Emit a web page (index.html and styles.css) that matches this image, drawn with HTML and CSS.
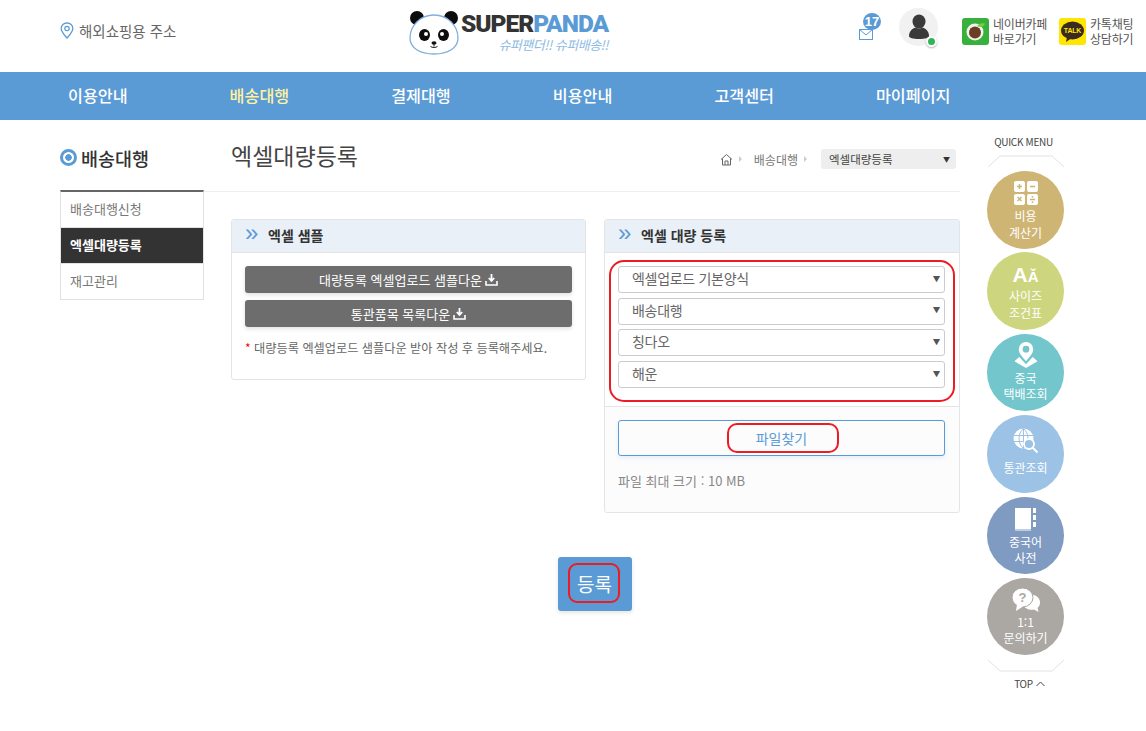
FILE: index.html
```html
<!DOCTYPE html>
<html lang="ko">
<head>
<meta charset="utf-8">
<title>엑셀대량등록</title>
<link rel="stylesheet" href="styles.css">
</head>
<body>
<header class="top">
  <a class="addr">
    <svg class="addr-ico" width="14" height="17" viewBox="0 0 14 17"><path d="M7 1C3.7 1 1.2 3.4 1.2 6.5 1.2 10 5 13.6 7 16c2-2.4 5.8-6 5.8-9.5C12.800 3.400 10.300 1 7 1z" fill="none" stroke="#5b9bd5" stroke-width="1.300"/><circle cx="7" cy="6.500" r="2.200" fill="none" stroke="#5b9bd5" stroke-width="1.200"/></svg>
    <span>해외쇼핑용 주소</span>
  </a>
  <div class="logo">
    <svg class="panda" width="52" height="46" viewBox="0 0 52 46">
      <circle cx="9" cy="8" r="7" fill="#0c0c0c"/>
      <circle cx="43" cy="8" r="7" fill="#0c0c0c"/>
      <path d="M26 5C12 5 2 16 2 28c0 10 10 16 24 16s24-6 24-16C50 16 40 5 26 5z" fill="#fff" stroke="#7fb0de" stroke-width="1.300"/>
      <ellipse cx="16.500" cy="25" rx="5.500" ry="6" fill="#0c0c0c"/>
      <ellipse cx="35.500" cy="25" rx="5.500" ry="6" fill="#0c0c0c"/>
      <circle cx="18" cy="24" r="2" fill="#fff"/>
      <circle cx="34" cy="24" r="2" fill="#fff"/>
      <ellipse cx="26" cy="33" rx="2.500" ry="1.800" fill="#111"/>
      <path d="M26 34v2.500M22.500 36.500c1.500 1.300 5.500 1.300 7 0" fill="none" stroke="#222" stroke-width="1"/>
    </svg>
    <div class="logo-text">
      <div class="logo-name"><span class="logo-dark">SUPER</span><span class="logo-blue">PANDA</span></div>
      <div class="logo-slogan">슈퍼팬더!! 슈퍼배송!!</div>
    </div>
  </div>
  <div class="util">
    <div class="mail">
      <span class="mail-count">17</span>
      <svg class="mail-ico" width="14" height="11" viewBox="0 0 14 11"><rect x=".5" y=".5" width="13" height="10" fill="#fff" stroke="#5b9bd5"/><path d="M.8.800 7 6l6.200-5.200" fill="none" stroke="#5b9bd5"/></svg>
    </div>
    <div class="avatar">
      <svg width="22" height="26" viewBox="0 0 22 26"><ellipse cx="11" cy="7.500" rx="6.500" ry="7" fill="#3a3a3a"/><path d="M1 22c0-5 3.500-7.500 6.500-8.500 2 1.300 5 1.300 7 0 3 1 6.500 3.500 6.500 8.500 0 2-4 3-10 3S1 24 1 22z" fill="#3a3a3a"/></svg>
      <span class="online"></span>
    </div>
    <a class="ext ext-cafe">
      <svg width="27" height="27" viewBox="0 0 27 27"><rect width="27" height="27" rx="3" fill="#37b03c"/><circle cx="13" cy="14" r="8.500" fill="#f3f3ee"/><circle cx="13" cy="14.500" r="6" fill="#6b3d22"/><path d="M15 8c2-2.500 5-3 8-2.500-1 3-4 4.500-8 2.500z" fill="#7ecb3d"/></svg>
      <span>네이버카페<br>바로가기</span>
    </a>
    <a class="ext ext-talk">
      <svg width="27" height="27" viewBox="0 0 27 27"><rect width="27" height="27" rx="3" fill="#ffe600"/><ellipse cx="13.500" cy="12.500" rx="11.500" ry="9" fill="#3a2a20"/><path d="M8 19l-1 5 5-3.500z" fill="#3a2a20"/><text class="talk-text" x="13.500" y="15" text-anchor="middle">TALK</text></svg>
      <span>카톡채팅<br>상담하기</span>
    </a>
  </div>
</header>

<nav class="gnb">
  <a>이용안내</a>
  <a class="on">배송대행</a>
  <a>결제대행</a>
  <a>비용안내</a>
  <a>고객센터</a>
  <a>마이페이지</a>
</nav>

<div class="page">
  <aside class="side">
    <h2 class="side-title"><span class="side-dot"></span>배송대행</h2>
    <ul class="side-menu">
      <li>배송대행신청</li>
      <li class="on">엑셀대량등록</li>
      <li>재고관리</li>
    </ul>
  </aside>

  <main class="main">
    <div class="title-row">
      <h1>엑셀대량등록</h1>
      <div class="crumbs">
        <svg width="13" height="13" viewBox="0 0 13 13"><path d="M1 6.500 6.500 1.500l5.500 5M2.500 5.500V12h8V5.500M5 12V8h3v4" fill="none" stroke="#666" stroke-width="1"/></svg>
        <i class="crumb-arrow"></i>
        <span>배송대행</span>
        <i class="crumb-arrow crumb-arrow-last"></i>
        <div class="crumb-select"><span>엑셀대량등록</span><b>▼</b></div>
      </div>
    </div>

    <div class="panels">
      <section class="panel panel-left">
        <h3 class="panel-head"><span class="chev">»</span><span>엑셀 샘플</span></h3>
        <div class="panel-body">
          <a class="dl-btn">대량등록 엑셀업로드 샘플다운
            <svg width="13" height="13" viewBox="0 0 13 13"><path d="M6.500 1v6.500M3.800 5l2.700 3 2.700-3" fill="none" stroke="#fff" stroke-width="1.800"/><path d="M1 8v4h11V8" fill="none" stroke="#fff" stroke-width="1.600"/></svg></a>
          <a class="dl-btn">통관품목 목록다운
            <svg width="13" height="13" viewBox="0 0 13 13"><path d="M6.500 1v6.500M3.800 5l2.700 3 2.700-3" fill="none" stroke="#fff" stroke-width="1.800"/><path d="M1 8v4h11V8" fill="none" stroke="#fff" stroke-width="1.600"/></svg></a>
          <p class="note"><em>*</em> 대량등록 엑셀업로드 샘플다운 받아 작성 후 등록해주세요.</p>
        </div>
      </section>

      <section class="panel panel-right">
        <h3 class="panel-head"><span class="chev">»</span><span>엑셀 대량 등록</span></h3>
        <div class="select-group">
          <div class="sel"><span>엑셀업로드 기본양식</span><b>▼</b></div>
          <div class="sel"><span>배송대행</span><b>▼</b></div>
          <div class="sel"><span>칭다오</span><b>▼</b></div>
          <div class="sel"><span>해운</span><b>▼</b></div>
          <div class="mark mark-selects"></div>
        </div>
        <div class="panel-foot">
          <a class="file-btn">파일찾기<span class="mark mark-file"></span></a>
          <p class="file-note">파일 최대 크기 : 10 MB</p>
        </div>
      </section>
    </div>

    <div class="submit-row">
      <a class="submit">등록<span class="mark mark-submit"></span></a>
    </div>
  </main>

  <aside class="quick">
    <div class="quick-label">QUICK MENU</div>
    <svg class="quick-cap" width="78" height="13" viewBox="0 0 78 13"><path d="M1 12 13 1h52l12 11" fill="none" stroke="#e2e2e2"/></svg>
    <a class="q q1">
      <svg width="24" height="24" viewBox="0 0 24 24"><rect width="11" height="11" rx="2" fill="#fff"/><rect x="13" width="11" height="11" rx="2" fill="#fff"/><rect y="13" width="11" height="11" rx="2" fill="#fff"/><rect x="13" y="13" width="11" height="11" rx="2" fill="#fff"/><path d="M3 5.500h5M5.500 3v5M16 5.500h5M3.500 16l4 4M7.500 16l-4 4M16 18.500h5" stroke="#cfb574" stroke-width="1.500"/><circle cx="18.500" cy="15.800" r=".9" fill="#cfb574"/><circle cx="18.500" cy="21.200" r=".9" fill="#cfb574"/></svg>
      <span class="q-text1">비용<br>계산기</span>
    </a>
    <a class="q q2">
      <span class="aa"><span class="aa-big">A</span><span class="aa-small">Ǎ</span></span>
      <span class="q-text2">사이즈<br>조건표</span>
    </a>
    <a class="q q3">
      <svg width="24" height="26" viewBox="0 0 24 27"><path fill-rule="evenodd" d="M12 0a7.500 7.500 0 0 0-7.500 7.500C4.500 12 9 16 12 20c3-4 7.500-8 7.500-12.500A7.500 7.500 0 0 0 12 0zm0 4a3.500 3.500 0 1 1 0 7 3.500 3.500 0 0 1 0-7z" fill="#fff"/><path d="M5 15.500 0 20l12 7 12-7-5-4.500-7 7.500z" fill="#fff"/></svg>
      <span class="q-text3">중국<br>택배조회</span>
    </a>
    <a class="q q4">
      <svg width="26" height="26" viewBox="0 0 26 26"><circle cx="10.500" cy="10.500" r="10" fill="#fff"/><path d="M.5 7.500h20M.5 13.500h20M10.500.5v20M10.500.5c-6 5-6 15 0 20M10.500.5c6 5 6 15 0 20" fill="none" stroke="#9cc2e5" stroke-width="1"/><circle cx="16" cy="16" r="5" fill="#9cc2e5" stroke="#fff" stroke-width="1.800"/><path d="m19.500 19.500 5 5" stroke="#fff" stroke-width="2"/></svg>
      <span class="q-single">통관조회</span>
    </a>
    <a class="q q5">
      <svg width="21" height="23" viewBox="0 0 21 23"><rect width="16" height="21" fill="#fff"/><rect y="21.500" width="16" height="1" fill="#fff"/><rect x="18" y="0" width="3" height="5" fill="#fff"/><rect x="18" y="7" width="3" height="5" fill="#fff"/><rect x="18" y="14" width="3" height="5" fill="#fff"/></svg>
      <span class="q-text5">중국어<br>사전</span>
    </a>
    <a class="q q6">
      <svg width="28" height="25" viewBox="0 0 28 25"><path d="M18 7c5-1 10 2.500 10 7.500 0 2.500-1 4-2.500 5.500l1 4-4.500-2.500c-5 1-9-1-10.500-4z" fill="#fff"/><ellipse cx="10.500" cy="9.500" rx="10.500" ry="9.500" fill="#fff" stroke="#aba7a3"/><path d="M5 16.500 4 23l7-4.500z" fill="#fff"/><text class="q-mark" x="10.500" y="14" text-anchor="middle">?</text></svg>
      <span>1:1<br>문의하기</span>
    </a>
    <svg class="quick-base" width="78" height="13" viewBox="0 0 78 13"><path d="M1 1l12 11h52l12-11" fill="none" stroke="#e2e2e2"/></svg>
    <a class="quick-top">TOP <svg width="9" height="6" viewBox="0 0 9 6"><path d="M.5 5l4-4 4 4" fill="none" stroke="#444"/></svg></a>
  </aside>
</div>
</body>
</html>
```

FILE: styles.css
```css
* { box-sizing: border-box; }
html, body { margin: 0; padding: 0; }
body {
  width: 1146px;
  height: 731px;
  overflow: hidden;
  background: #fff;
  color: #555;
  font-family: "Noto Sans CJK KR", "Noto Sans", sans-serif;
  font-size: 13px;
}
h1, h2, h3, p, ul { margin: 0; padding: 0; }
ul { list-style: none; }

/* header */
.top {
  display: flex;
  align-items: flex-start;
  height: 72px;
  padding-left: 60px;
}
.addr {
  display: flex;
  align-items: center;
  gap: 5px;
  width: 350px;
  height: 61px;
  font-size: 14.500px;
  color: #666;
}
.logo {
  display: flex;
  width: 200px;
  padding-top: 10px;
  margin-left: -2px;
}
.panda { flex: none; margin-right: 1px; }
.logo-text { display: flex; flex-direction: column; width: 147px; }
.logo-name {
  font-family: Roboto, "Liberation Sans", sans-serif;
  font-weight: 900;
  font-size: 24.500px;
  line-height: 28px;
  letter-spacing: -1px;
  white-space: nowrap;
}
.logo-dark { color: #333; }
.logo-blue { color: #5b9bd5; }
.logo-slogan {
  align-self: flex-end;
  margin-top: -1px;
  font-size: 13px;
  line-height: 16px;
  font-style: italic;
  color: #8dbbe3;
  white-space: nowrap;
  letter-spacing: -.5px;
}
.util {
  display: flex;
  align-items: flex-start;
  margin-left: 251px;
}
.mail {
  position: relative;
  flex: none;
  width: 40px;
  height: 42px;
}
.mail-count {
  position: absolute;
  left: 4px;
  top: 13px;
  width: 18px;
  height: 17px;
  border-radius: 50%;
  background: #5b9bd5;
  color: #fff;
  font-size: 13px;
  font-weight: 700;
  line-height: 17px;
  text-align: center;
  font-family: "Liberation Sans", sans-serif;
}
.mail-ico { position: absolute; left: 0; top: 29px; }
.avatar {
  position: relative;
  display: flex;
  flex: none;
  align-items: center;
  justify-content: center;
  width: 39px;
  height: 38px;
  margin-top: 8px;
  margin-right: 24px;
  border-radius: 50%;
  background: #f1f1f1;
}
.online {
  position: absolute;
  right: 1px;
  bottom: -1px;
  width: 11px;
  height: 11px;
  border: 2px solid #fff;
  border-radius: 50%;
  background: #2fb457;
  box-shadow: 0 1px 2px rgba(0, 0, 0, .3);
}
.ext {
  display: flex;
  flex: none;
  align-items: center;
  gap: 4px;
  margin-top: 17px;
  font-size: 12px;
  line-height: 14.500px;
  color: #555;
  letter-spacing: -.2px;
}
.ext svg { flex: none; }
.ext-cafe { width: 97px; }
.talk-text { font: 700 7px "Liberation Sans", sans-serif; fill: #ffe600; }

/* nav */
.gnb {
  display: flex;
  height: 48px;
  padding: 0 0 2px 68px;
  align-items: center;
  background: #5b9bd5;
}
.gnb a {
  width: 161.600px;
  color: #fff;
  font-size: 16.200px;
  font-weight: 500;
  white-space: nowrap;
}
.gnb a.on { color: #fff3a0; }

/* layout */
.page {
  display: flex;
  align-items: flex-start;
  padding-left: 60px;
}
.side { width: 144px; flex: none; }
.side-title {
  display: flex;
  align-items: center;
  gap: 4px;
  height: 70px;
  padding-top: 5px;
  font-size: 18.500px;
  font-weight: 500;
  color: #333;
}
.side-dot {
  width: 17px;
  height: 17px;
  border: 3px solid #5b9bd5;
  border-radius: 50%;
  background: radial-gradient(circle, #5b9bd5 0 3px, #fff 3.500px);
}
.side-menu {
  border-top: 2px solid #666;
  border-left: 1px solid #e2e2e2;
  border-right: 1px solid #e2e2e2;
  border-bottom: 1px solid #e2e2e2;
}
.side-menu li {
  height: 36px;
  padding-left: 9px;
  line-height: 33px;
  font-size: 13px;
  color: #777;
  border-bottom: 1px solid #e2e2e2;
}
.side-menu li:last-child { height: 35px; border-bottom: 0; }
.side-menu li.on {
  background: #333;
  color: #fff;
  font-weight: 700;
}

.main { width: 756px; flex: none; }
.title-row {
  display: flex;
  justify-content: space-between;
  align-items: flex-start;
  height: 72px;
  padding-left: 27px;
  border-bottom: 1px solid #eee;
}
.title-row h1 {
  margin-top: 17px;
  font-size: 23px;
  line-height: 36px;
  font-weight: 400;
  color: #444;
}
.crumbs {
  display: flex;
  align-items: center;
  margin-top: 29px;
  margin-right: 4px;
  font-size: 12px;
  color: #777;
}
.crumb-arrow {
  width: 0;
  height: 0;
  margin: 0 12px 0 6px;
  border-left: 3px solid #ccc;
  border-top: 3px solid transparent;
  border-bottom: 3px solid transparent;
}
.crumb-arrow-last { margin: 0 14px 0 6px; }
.crumb-select {
  display: flex;
  justify-content: space-between;
  align-items: center;
  width: 135px;
  height: 20px;
  padding: 0 6px 0 8px;
  border-radius: 3px;
  background: #eee;
  font-size: 11.500px;
  color: #444;
}
.crumb-select b { font-size: 7px; font-weight: 400; color: #333; }

.panels {
  display: flex;
  align-items: flex-start;
  gap: 18px;
  padding: 27px 0 0 27px;
}
.panel {
  border: 1px solid #e4e4e4;
  border-radius: 3px;
  background: #fff;
}
.panel-left { width: 355px; height: 161px; }
.panel-right { width: 356px; height: 294px; }
.panel-head {
  display: flex;
  align-items: center;
  height: 33px;
  padding: 0 0 3px 13px;
  border-bottom: 1px solid #e4e4e4;
  background: #eaf0f8;
  font-size: 14px;
  font-weight: 700;
  color: #333;
}
.chev {
  width: 23px;
  margin-top: -3px;
  font-family: "Liberation Sans", sans-serif;
  font-size: 24px;
  font-weight: 400;
  line-height: 20px;
  color: #5b9bd5;
}
.panel-body { padding: 13px 13px 0; }
.dl-btn {
  display: flex;
  justify-content: center;
  align-items: center;
  gap: 3px;
  height: 27px;
  margin-bottom: 7px;
  padding-bottom: 1px;
  border-radius: 3px;
  background: #6d6d6d;
  box-shadow: 0 2px 4px rgba(0, 0, 0, .12);
  color: #fff;
  font-size: 13px;
}
.note {
  margin-top: 12px;
  font-size: 12.200px;
  line-height: 18px;
  color: #666;
  white-space: nowrap;
}
.note em { color: #e00; font-style: normal; }

.select-group {
  position: relative;
  display: flex;
  flex-direction: column;
  gap: 4.700px;
  height: 154px;
  padding: 13px 14px 0 13px;
  border-bottom: 1px solid #e4e4e4;
}
.sel {
  display: flex;
  justify-content: space-between;
  align-items: center;
  flex: none;
  height: 27px;
  padding: 0 4px 3px 13px;
  border: 1px solid #ccc;
  border-radius: 3px;
  background: #fff;
  font-size: 14px;
  letter-spacing: -.3px;
  color: #666;
}
.sel b { font-size: 7.500px; font-weight: 400; color: #555; }

.panel-foot {
  height: 105px;
  padding: 13px 14px 0 13px;
  border-radius: 0 0 3px 3px;
  background: #fcfcfc;
}
.file-btn {
  position: relative;
  display: block;
  height: 36px;
  border: 1px solid #5b9bd5;
  border-radius: 3px;
  background: #fcfcfc;
  box-shadow: 0 2px 4px rgba(91, 155, 213, .15);
  color: #5b9bd5;
  font-size: 14px;
  line-height: 34px;
  text-align: center;
}
.file-note {
  margin-top: 15px;
  font-size: 13px;
  line-height: 20px;
  color: #888;
}

.submit-row {
  display: flex;
  justify-content: center;
  padding: 44px 0 0 25px;
}
.submit {
  position: relative;
  display: block;
  width: 74px;
  height: 54px;
  border-radius: 3px;
  background: #5b9bd5;
  box-shadow: 0 2px 4px rgba(0, 0, 0, .1);
  color: #fff;
  font-size: 19px;
  line-height: 54px;
  text-align: center;
}

/* red annotations */
.mark {
  position: absolute;
  border: 2.500px solid #ed1c24;
  pointer-events: none;
}
.mark-selects { left: 4px; top: 7px; width: 346px; height: 142px; border-radius: 15px; }
.mark-file { left: 108px; top: 2px; width: 112px; height: 30px; border-radius: 10px; }
.mark-submit { left: 10px; top: 6px; width: 52px; height: 40px; border-radius: 9px; }

/* quick menu */
.quick {
  display: flex;
  flex-direction: column;
  align-items: center;
  width: 77px;
  margin-left: 27px;
  flex: none;
}
.quick-label {
  height: 35px;
  margin-left: -4px;
  padding-top: 14px;
  line-height: 16px;
  font-size: 10px;
  color: #444;
  white-space: nowrap;
  letter-spacing: -.3px;
}
.quick-cap { display: block; flex: none; margin-bottom: 3px; height: 13px; }
.q {
  display: flex;
  flex-direction: column;
  align-items: center;
  flex: none;
  width: 77px;
  height: 77.500px;
  margin-bottom: 3.900px;
  padding-top: 10px;
  border-radius: 50%;
  color: #fff;
  font-size: 12px;
  line-height: 16.500px;
  text-align: center;
}
.q svg { flex: none; margin-bottom: 1px; }
.q1 { background: #cfb574; }
.q2 { background: #cdd67f; }
.q3 { background: #72c6cc; padding-top: 8px; }
.q4 { background: #9cc2e5; padding-top: 13px; }
.q5 { background: #7f9bc1; padding-top: 11px; }
.q6 { background: #aba7a3; padding-top: 10px; }
.q-single { margin-top: 5px; }
.q-text1 { margin-top: 2px; }
.q-text2 { margin-top: 2px; }
.q-text3 { margin-top: 1px; }
.q-text5 { margin-top: 2px; }
.aa {
  display: flex;
  align-items: flex-end;
  justify-content: center;
  height: 24px;
  font-family: "Liberation Sans", sans-serif;
  font-weight: 700;
  line-height: 22px;
}
.aa-big { font-size: 21px; }
.aa-small { font-size: 15px; line-height: 19px; }
.q-mark { font: 700 13px "Liberation Sans", sans-serif; fill: #aba7a3; }
.quick-base { display: block; flex: none; height: 13px; margin-top: 0; }
.quick-top {
  display: flex;
  align-items: center;
  gap: 3px;
  margin: 4px 0 0 8px;
  font-size: 10px;
  line-height: 16px;
  letter-spacing: -.3px;
  color: #444;
}
```
